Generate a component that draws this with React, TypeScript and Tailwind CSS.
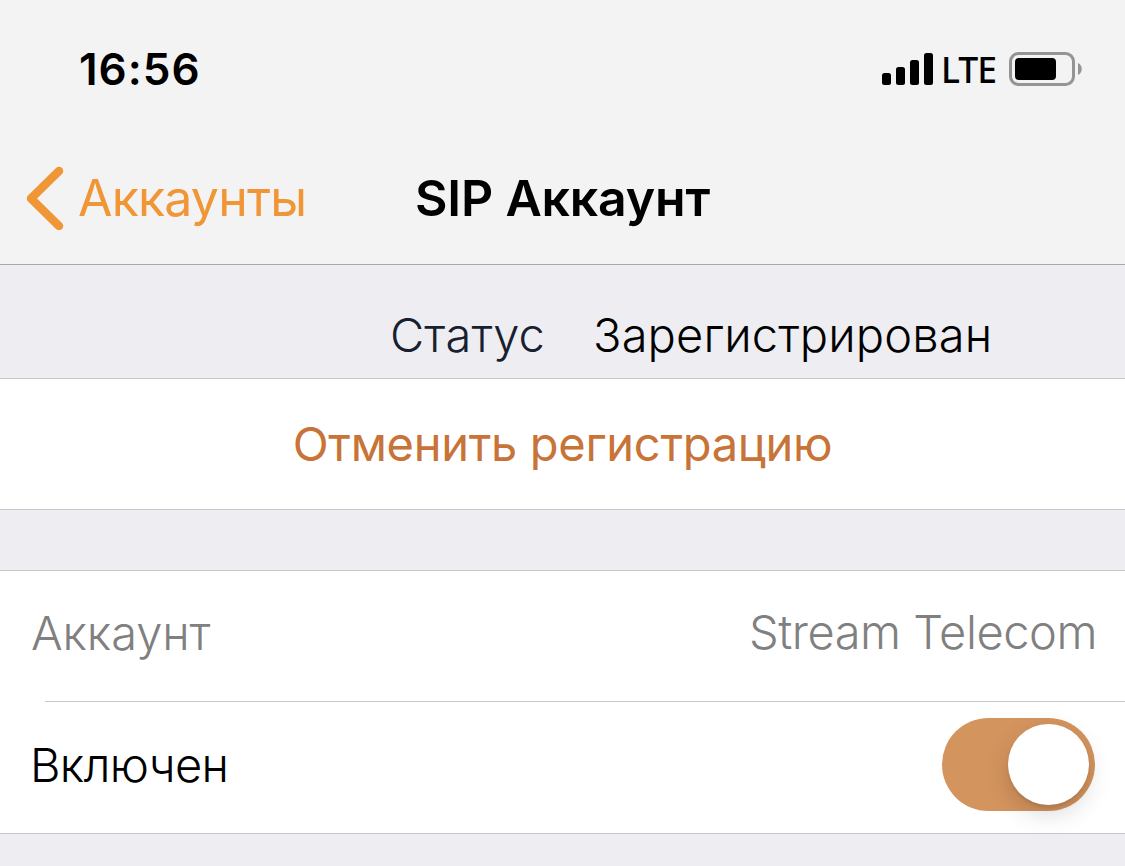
export default function App() {
  return (
    <div className="flex h-[866px] w-[1125px] flex-col overflow-hidden bg-[#eeedf2] font-['Inter','Liberation_Sans',sans-serif] text-black">
      <header className="h-[265px] border-b border-[#a9a9ab] bg-[#f3f3f3]">
        <div className="flex h-[132px] items-center justify-between pt-[5px] pr-[42px] pl-[79px]">
          <span className="text-[44px] font-semibold tracking-[1px]">16:56</span>
          <div className="flex items-center">
            <svg width="52" height="32" viewBox="0 0 52 32">
              <rect x="0" y="20" width="9" height="12" rx="2.5" />
              <rect x="14" y="14" width="9" height="18" rx="2.5" />
              <rect x="28" y="7" width="9" height="25" rx="2.5" />
              <rect x="42" y="0" width="9" height="32" rx="2.5" />
            </svg>
            <span className="ml-[7px] font-['Noto_Sans',sans-serif] text-[35.5px] leading-[48px] font-medium tracking-[-1px]">
              LTE
            </span>
            <svg className="ml-[13px]" width="74" height="34" viewBox="0 0 74 34">
              <rect x="1.5" y="1.5" width="63" height="31" rx="8" fill="none" stroke="#949494" strokeWidth="3" />
              <rect x="6" y="6" width="41" height="22" rx="4" />
              <path d="M69 11c5 2 5 10 0 12z" fill="#949494" />
            </svg>
          </div>
        </div>
        <nav className="grid h-[132px] grid-cols-[415px_1fr] items-center">
          <div className="flex items-center pl-[26px] text-[#f09637]">
            <svg width="38" height="64" viewBox="0 0 38 64" fill="none" stroke="currentColor" strokeWidth="8.5" strokeLinecap="round" strokeLinejoin="round">
              <path d="M33 5 5 32.5 33 60" />
            </svg>
            <span className="ml-[14px] text-[50px] tracking-[-0.8px]">Аккаунты</span>
          </div>
          <h1 className="text-[50px] font-semibold tracking-[-0.2px]">SIP Аккаунт</h1>
        </nav>
      </header>
      <section className="flex h-[113px] items-center pt-[27px] pl-[390px] text-[47px] font-light tracking-[0.15px]">
        <span className="w-[203px] text-[#16202e]">Статус</span>
        <span>Зарегистрирован</span>
      </section>
      <button className="h-[132px] border-y border-[#c8c7cc] bg-white text-[47px] tracking-[-0.3px] text-[#c87337]">
        Отменить регистрацию
      </button>
      <section className="mt-[60px] h-[264px] border-y border-[#c8c7cc] bg-white text-[47px] font-light">
        <div className="flex h-[130px] items-center justify-between pr-[28px] pb-[7px] pl-[31px] text-[#808080]">
          <span className="pt-[2px] tracking-[-0.1px]">Аккаунт</span>
          <span className="tracking-[-0.45px]">Stream Telecom</span>
        </div>
        <div className="ml-[45px] h-px bg-[#c8c7cc]" />
        <div className="flex h-[131px] items-center justify-between pr-[30px] pb-[6px] pl-[30px]">
          <span className="pt-px tracking-[-0.65px]">Включен</span>
          <button
            role="switch"
            aria-checked="true"
            className="flex h-[93px] w-[153px] items-center justify-end rounded-full bg-[#d4945e] pr-[6px]"
          >
            <span className="size-[81px] rounded-full bg-white shadow-[0_9px_24px_rgba(0,0,0,0.15),0_3px_3px_rgba(0,0,0,0.08)]" />
          </button>
        </div>
      </section>
    </div>
  );
}
